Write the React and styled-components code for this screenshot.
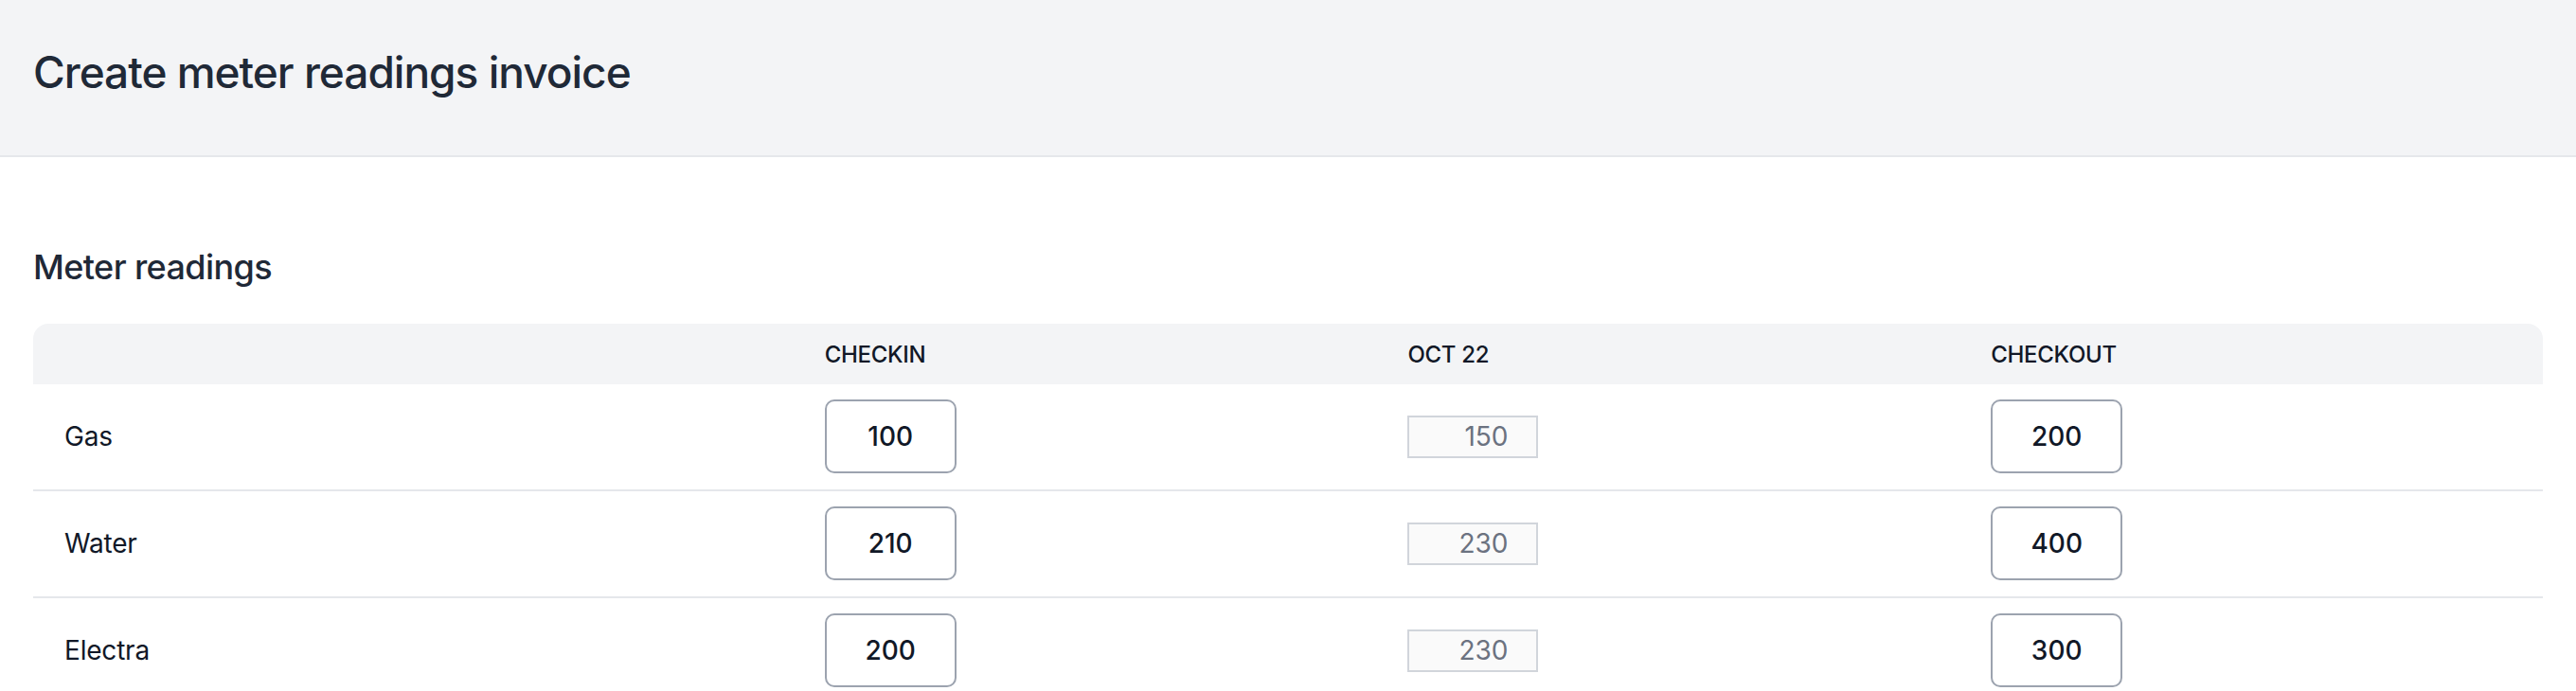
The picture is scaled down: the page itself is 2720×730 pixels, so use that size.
import React from 'react'
import styled, { createGlobalStyle } from 'styled-components';

const GlobalStyle = createGlobalStyle`
    html, body {
        margin: 0;
        padding: 0;
        background: #ffffff;
        font-family: Inter, "Noto Sans", "Liberation Sans", sans-serif;
        color: #111827;
    }
    * {
        box-sizing: border-box;
    }
`

const PageHeader = styled.header`
    background: #f3f4f6;
    border-bottom: 2px solid #e5e7eb;
    padding: 44px 35px 56px;
`

const Title = styled.h1`
    margin: 0;
    font-size: 46px;
    line-height: 64px;
    font-weight: 500;
    letter-spacing: -1px;
    color: #1f2937;
`

const Content = styled.main`
    padding: 92px 35px 0;
`

const SectionTitle = styled.h2`
    margin: 0 0 36px;
    font-size: 36px;
    line-height: 48px;
    font-weight: 500;
    letter-spacing: -0.6px;
    color: #1f2937;
`

const Table = styled.div`
    width: 100%;
`

const Row = styled.div`
    display: grid;
    grid-template-columns: 803fr 616fr 616fr 616fr;
    align-items: center;
`

const HeadRow = styled(Row)`
    height: 64px;
    background: #f3f4f6;
    border-radius: 16px 16px 0 0;
`

const BodyRow = styled(Row)`
    padding: 16px 0 17px;
    border-bottom: 2px solid #e5e7eb;
`

const HeadCell = styled.div`
    padding: 0 33px;
    font-size: 24px;
    font-weight: 500;
    letter-spacing: -0.3px;
    text-transform: uppercase;
    color: #111827;
`

const Cell = styled.div`
    padding: 0 33px;
    display: flex;
    align-items: center;
    font-size: 28px;
    letter-spacing: -0.2px;
    color: #111827;
`

const ReadingInput = styled.input`
    width: 139px;
    height: 78px;
    border: 2px solid #9ca3af;
    border-radius: 10px;
    background: #ffffff;
    text-align: center;
    font-family: inherit;
    font-size: 28px;
    font-weight: 500;
    color: #111827;
    outline: 0;
    padding: 0;
`

const LockedInput = styled.input`
    width: 138px;
    height: 45px;
    border: 2px solid #d1d5db;
    border-radius: 0;
    background: #fafafa;
    text-align: right;
    padding: 0 30px 0 0;
    font-family: inherit;
    font-size: 28px;
    color: #6b7280;
    -webkit-text-fill-color: #6b7280;
    opacity: 1;
`

const readings = [
    { name: 'Gas', checkin: 100, month: 150, checkout: 200 },
    { name: 'Water', checkin: 210, month: 230, checkout: 400 },
    { name: 'Electra', checkin: 200, month: 230, checkout: 300 },
]

export default function App() {
    return (
        <>
            <GlobalStyle />
            <PageHeader>
                <Title>Create meter readings invoice</Title>
            </PageHeader>
            <Content>
                <SectionTitle>Meter readings</SectionTitle>
                <Table>
                    <HeadRow>
                        <HeadCell></HeadCell>
                        <HeadCell>Checkin</HeadCell>
                        <HeadCell>Oct 22</HeadCell>
                        <HeadCell>Checkout</HeadCell>
                    </HeadRow>
                    {readings.map((item) => (
                        <BodyRow key={item.name}>
                            <Cell>{item.name}</Cell>
                            <Cell><ReadingInput defaultValue={item.checkin} /></Cell>
                            <Cell><LockedInput value={item.month} disabled readOnly /></Cell>
                            <Cell><ReadingInput defaultValue={item.checkout} /></Cell>
                        </BodyRow>
                    ))}
                </Table>
            </Content>
        </>
    )
}
